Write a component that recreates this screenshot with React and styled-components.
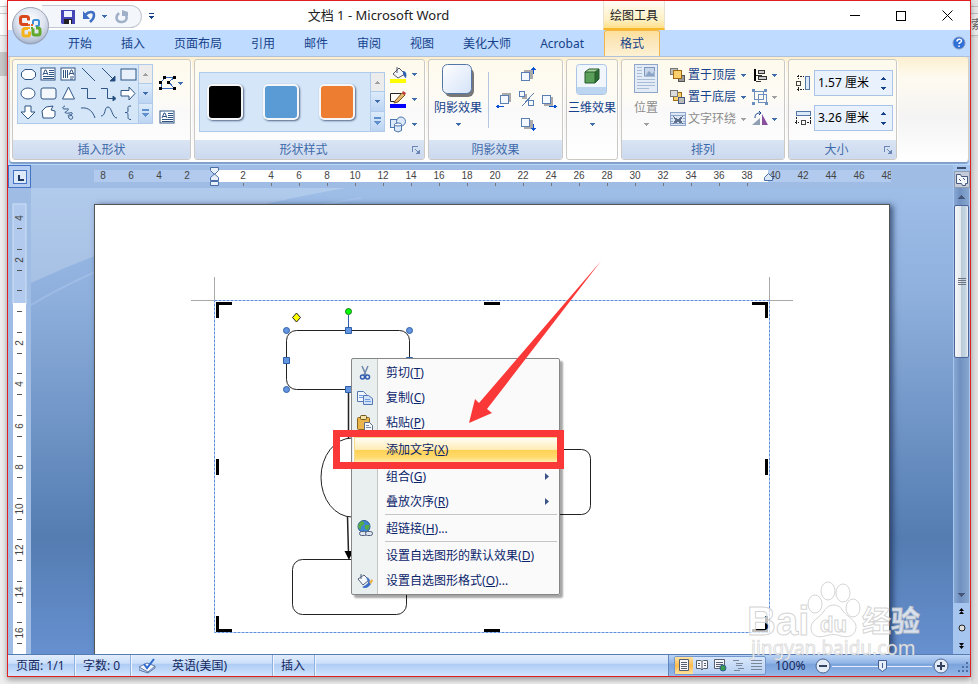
import React from 'react';
import styled, { createGlobalStyle, css } from 'styled-components';

const GlobalStyle = createGlobalStyle`
  * { box-sizing: border-box; }
  body {
    margin: 0;
    font-family: "Noto Sans", "Noto Sans CJK SC", sans-serif;
    font-size: 12px;
    line-height: 16px;
    color: #15428b;
  }
  button, input {
    font: inherit;
    color: inherit;
    margin: 0;
    padding: 0;
    border: 0;
    background: none;
  }
  svg { display: block; flex: none; }
`;

/*
* Desktop and window
* */
const Desktop = styled.div`
  display: flex;
  min-height: 100vh;
  background: linear-gradient(#e9e9e9, #f0f0f0);
`;

const Gutter = styled.div`
  flex: none;
  width: ${(p) => p.$width}px;
  overflow: hidden;
  white-space: nowrap;
  padding-top: 17px;
  color: #666;
  background: ${(p) => (p.$side === 'left'
    ? 'linear-gradient(#fff 0 6px, #ccc 6px 7px, #fafafa 7px 13px, #ccc 13px 14px, #fff 14px 35px, #ccc 35px 36px, #f0f0f0 36px 52px, #c8c8c8 52px 76px, #eee 76px)'
    : 'linear-gradient(#e4e4e4 0 6px, #bbb 6px 7px, #e8e8e8 7px 13px, #bbb 13px 14px, #ececec 14px 35px, #bbb 35px 36px, #dcdcdc 36px 38px, #e2e2e2 38px)')};
`;

const Window = styled.div`
  position: relative;
  flex: 1;
  min-width: 0;
  display: flex;
  flex-direction: column;
  margin-bottom: 7px;
  border: 1px solid #e02020;
  background: #bfdbff;
  box-shadow: 0 3px 6px rgba(0, 0, 0, 0.35);
`;

/*
* Title bar
* */
const TitleBar = styled.header`
  display: flex;
  height: 29px;
  background: #fff;
  color: #222;
`;

const OfficeButton = styled.button`
  position: absolute;
  left: 3px;
  top: 5px;
  z-index: 1;
`;

const QuickAccess = styled.div`
  display: flex;
  align-items: center;
  gap: 8px;
  width: 100px;
  height: 23px;
  margin: 4px 0 0 34px;
  padding-left: 19px;
  border: 1px solid #c3c8d0;
  border-left: 0;
  border-radius: 0 12px 12px 0;
  background: #f3f7fb;
`;

const MoreButton = styled.button`
  margin: 0 0 0 7px;
`;

const Title = styled.div`
  flex: 1;
  text-align: center;
  padding-top: 6px;
  font-size: 13px;
`;

const ContextTitle = styled.div`
  width: 62px;
  padding-top: 7px;
  text-align: center;
  background: linear-gradient(#fffdf7, #fff0c2 70%, #ffe08a);
  border-bottom: 2px solid #f7b92a;
  border-left: 1px solid #e8e0d0;
  border-right: 1px solid #e8e0d0;
`;

const WindowButtons = styled.div`
  display: flex;
  margin-left: 167px;
`;

const WindowButton = styled.button`
  display: flex;
  align-items: center;
  justify-content: center;
  width: 46px;
  height: 29px;
`;

/*
* Ribbon
* */
const TabRow = styled.nav`
  display: flex;
  align-items: flex-end;
  height: 27px;
  padding-left: 45px;
  border-bottom: 1px solid #b0c0d8;
`;

const Tab = styled.button`
  height: 27px;
  padding: 2px 14px 0 15px;
  ${(p) => p.$active && css`
    margin-left: 6px;
    height: 26px;
    padding: 0 15px;
    border: 1px solid #f0b64c;
    border-bottom: 0;
    border-radius: 3px 3px 0 0;
    background: linear-gradient(#ffe09a, #fbe6b9 40%, #fdf1d4);
  `}
`;

const HelpButton = styled.button`
  margin: 0 4px 6px auto;
`;

const Ribbon = styled.div`
  display: flex;
  gap: 3px;
  margin: 0 1px 3px;
  padding: 2px 2px 1px;
  border: 1px solid #d8d0c0;
  border-top: 0;
  border-bottom-color: #fff;
  border-radius: 0 3px 4px 4px;
  background: linear-gradient(#fdf0d0, #fefaf0 20%, #f4f4f4 60%, #fff);
  box-shadow: 0 2px 1px #7f9ec8;
`;

const GroupBox = styled.section`
  flex: none;
  display: flex;
  flex-direction: column;
  width: ${(p) => p.$width}px;
  height: 101px;
  border: 1px solid #ccc9c4;
  border-radius: 3px;
  background: linear-gradient(#fefaec, #fdfbf5 40%, #f9f9f9 50%, #fff);
  box-shadow: 1px 1px 0 #fff;
`;

const GroupBody = styled.div`
  flex: 1;
  display: flex;
  gap: ${(p) => p.$gap || 0}px;
  padding: 4px ${(p) => (p.$pad === undefined ? 4 : p.$pad)}px 0;
`;

const GroupLabel = styled.h2`
  display: flex;
  align-items: center;
  margin: 0;
  height: 19px;
  font-size: 12px;
  font-weight: 400;
  color: #3e6aaa;
  background: linear-gradient(#d9e4f4, #ccd9ee);
  border-radius: 0 0 2px 2px;
  span { flex: 1; text-align: center; }
  button { margin-right: 4px; }
`;

const Gallery = styled.div`
  display: flex;
  height: 60px;
  border: 1px solid #b0cbea;
  background: #d4e6f8;
  margin-top: ${(p) => p.$top || 0}px;
`;

const ShapeGrid = styled.div`
  display: grid;
  grid-template-columns: repeat(6, 20px);
  grid-auto-rows: 19px;
`;

const IconButton = styled.button`
  display: flex;
  align-items: center;
  justify-content: center;
  gap: ${(p) => p.$gap || 0}px;
`;

const ScrollColumn = styled.div`
  display: grid;
  grid-template-rows: repeat(3, 1fr);
  width: 14px;
  border-left: 1px solid #b0cbea;
`;

const ScrollStep = styled.button`
  display: flex;
  align-items: center;
  justify-content: center;
  border-bottom: 1px solid #b0cbea;
  background: ${(p) => (p.$off ? '#ececec' : 'linear-gradient(#dcebfb, #bcd4f2)')};
  &:last-child { border-bottom: 0; }
`;

const SwatchRow = styled.div`
  display: flex;
  align-items: center;
  gap: 20px;
  padding: 0 15px 0 7px;
`;

const Swatch = styled.button`
  width: 36px;
  height: 36px;
  border: 2px solid #f4f6f8;
  border-radius: 5px;
  background: ${(p) => p.$color};
  box-shadow: 1px 1px 2px rgba(30, 50, 90, 0.7);
`;

const Stack = styled.div`
  display: flex;
  flex-direction: column;
  gap: ${(p) => p.$gap || 0}px;
  padding-top: ${(p) => p.$top || 0}px;
`;

const BigButton = styled.button`
  display: flex;
  flex-direction: column;
  align-items: center;
  width: ${(p) => p.$width || 50}px;
  height: 68px;
  white-space: nowrap;
  color: ${(p) => (p.disabled ? '#8d8d8d' : '#15428b')};
`;

const BigIcon = styled.span`
  height: 36px;
`;

const BigCaret = styled.span`
  margin-top: 7px;
`;

const Divider = styled.div`
  width: 1px;
  height: 56px;
  margin: 8px 6px 0 5px;
  background: #b6c8e0;
`;

const NudgePad = styled.div`
  display: grid;
  grid-template-columns: repeat(3, 21px);
  grid-template-rows: 24px 22px 24px;
  justify-items: center;
  align-items: center;
`;

const RowButton = styled.button`
  display: flex;
  align-items: center;
  gap: 2px;
  height: 22px;
  color: ${(p) => (p.disabled ? '#8d8d8d' : '#15428b')};
  span { margin-right: 3px; }
`;

const SizeRow = styled.label`
  display: flex;
  align-items: center;
  gap: 3px;
`;

const SpinBox = styled.span`
  display: flex;
  width: 79px;
  height: 26px;
  border: 1px solid #a9c4e8;
  background: #e9f2fc;
  color: #000;
  input { flex: 1; width: 0; padding-left: 3px; }
`;

const SpinButtons = styled.span`
  display: flex;
  flex-direction: column;
  justify-content: center;
  gap: 7px;
  width: 18px;
  align-items: center;
`;

/*
* Document area
* */
const Workspace = styled.main`
  flex: 1;
  display: flex;
  min-height: 0;
`;

const RulerColumn = styled.div`
  flex: none;
  display: flex;
  flex-direction: column;
  width: 23px;
  background: #9ebce4;
`;

const TabSelector = styled.button`
  display: flex;
  align-items: center;
  justify-content: center;
  width: 23px;
  height: 23px;
  border: 1px solid #4472c4;
  background: #b4cdf0;
`;

const DocColumn = styled.div`
  flex: 1;
  min-width: 0;
  display: flex;
  flex-direction: column;
`;

const RulerRow = styled.div`
  position: relative;
  height: 23px;
  padding: 5px 62px 0 63px;
  background: #9ebce4;
`;

const RulerStrip = styled.div`
  height: 18px;
  overflow: hidden;
  background: linear-gradient(90deg, #b1caed 120px, #fff 120px 674px, #b1caed 674px) 0 0 / 100% 12px no-repeat;
`;

const RulerCells = styled.div`
  display: flex;
  margin-left: -5px;
`;

const RulerCell = styled.span`
  flex: none;
  display: flex;
  flex-direction: column;
  align-items: center;
  gap: 2px;
  width: 28px;
  font: 10px/11px "Liberation Sans", sans-serif;
  color: #444;
  &::after {
    content: "";
    width: 1px;
    height: 3px;
    background: ${(p) => (p.$tick ? '#777' : 'transparent')};
  }
`;

const IndentMarker = styled.svg`
  position: absolute;
  left: ${(p) => p.$left}px;
  top: 2px;
`;

const Backdrop = styled.div`
  flex: 1;
  display: flex;
  position: relative;
  padding: 16px 63px 0;
  overflow: hidden;
  background: linear-gradient(#9ebee8, #8eafdc 24%, #7297c8 48%, #557db2 75%, #6690cf);
`;

const Wave = styled.svg`
  position: absolute;
  left: 0;
  top: 0;
`;

const Page = styled.article`
  position: relative;
  flex: 1;
  min-height: 450px;
  border: 1px solid #555;
  border-bottom: 0;
  background: #fff;
  box-shadow: 3px 1px 6px rgba(20, 40, 80, 0.7);
`;

const Drawing = styled.svg`
  position: absolute;
  left: 0;
  top: 0;
`;

const ScrollBar = styled.div`
  flex: none;
  display: flex;
  flex-direction: column;
  align-items: center;
  width: 17px;
  background: #a6c6f0;
`;

const SplitHandle = styled.div`
  width: 9px;
  height: 2px;
  margin: 2px 0;
  background: #3f4f70;
`;

const RulerToggle = styled.button`
  display: flex;
  align-items: center;
  justify-content: center;
  width: 16px;
  height: 17px;
  border: 1px solid #8e9cb4;
  background: #c5cbd8;
`;

const Track = styled.div`
  flex: 1;
  display: flex;
  flex-direction: column;
  width: 15px;
  background: linear-gradient(90deg, #88a8d4, #7090c0 40%, #88a8d0);
`;

const TrackButton = styled.button`
  display: flex;
  align-items: center;
  justify-content: center;
  height: 17px;
`;

const Thumb = styled.div`
  display: flex;
  align-items: center;
  justify-content: center;
  height: 153px;
  margin-bottom: auto;
  border: 1px solid #4d649a;
  border-radius: 2px;
  background: linear-gradient(90deg, #f4f6f8, #e6eaee 45%, #b9cbd9 50%, #c8d6e2 85%, #f0f4f8);
`;

const Browse = styled.div`
  display: flex;
  flex-direction: column;
  align-items: center;
  justify-content: space-around;
  height: 51px;
`;

/*
* Context menu
* */
const Menu = styled.ul`
  position: absolute;
  left: 256px;
  top: 153px;
  width: 209px;
  margin: 0;
  padding: 1px 0;
  list-style: none;
  border: 1px solid #868686;
  border-radius: 2px;
  color: #0a246a;
  background: linear-gradient(90deg, #e9eeee 25px, #c5c5c5 25px 26px, #fafafa 26px);
  box-shadow: 3px 3px 2px rgba(0, 0, 0, 0.35);
`;

const MenuItem = styled.button`
  display: flex;
  align-items: center;
  width: 100%;
  height: 25px;
  padding-right: 10px;
  text-align: left;
  ${(p) => p.$selected && css`
    width: 205px;
    height: 26px;
    margin: 2px 0 1px 2px;
    border: 1px solid #f2d98c;
    box-shadow: 0 0 0 1px #fff;
    background: linear-gradient(#fffdf4, #ffecb5 48%, #ffd255 52%, #ffda6c 80%, #ffeeb0);
    padding-left: 0;
  `}
`;

const MenuIcon = styled.span`
  flex: none;
  display: flex;
  justify-content: center;
  width: ${(p) => (p.$selected ? 31 : 34)}px;
  padding-right: 8px;
`;

const MenuText = styled.span`
  flex: 1;
`;

const MenuRule = styled.li`
  height: 1px;
  margin: 0 2px 1px 33px;
  background: #c5c5c5;
`;

const RedBox = styled.div`
  position: absolute;
  left: 238px;
  top: 225px;
  width: 231px;
  height: 39px;
  border: 7px solid #fb3838;
`;

/*
* Status bar
* */
const StatusBar = styled.footer`
  display: flex;
  height: 22px;
  border-top: 1px solid #567db1;
  color: #15285f;
  background: linear-gradient(#e2edfc, #cbdffa 40%, #adcbf3 42%, #c4dcfb 80%, #d3e5fd);
`;

const StatusCell = styled.div`
  display: flex;
  align-items: center;
  width: ${(p) => p.$width}px;
  padding-left: 8px;
  white-space: nowrap;
  border-right: 1px solid #8fb0dc;
  box-shadow: 1px 0 0 #eef5fe;
`;

const StatusTools = styled.div`
  display: flex;
  align-items: center;
  width: 302px;
  margin-left: auto;
  padding: 0 1px 0 5px;
  border-left: 1px solid #5f86bd;
  background: linear-gradient(#bcd4f6, #8fb3e5 40%, #7ba3dc 42%, #8bb0e4 80%, #98baea);
`;

const ViewButtons = styled.div`
  display: flex;
  height: 19px;
  border: 1px solid #7397cc;
  border-radius: 2px;
  background: linear-gradient(#d8e7fb, #b6cff2);
`;

const ViewButton = styled.button`
  display: flex;
  align-items: center;
  justify-content: center;
  width: 18px;
  background: ${(p) => (p.$active ? 'linear-gradient(#ffe3a3, #fdbb4e 50%, #ffe39b)' : 'none')};
`;

const ZoomText = styled.span`
  width: 49px;
  padding-left: 9px;
`;

const ZoomLine = styled.svg`
  margin: 0 1px;
`;

const Grip = styled.svg`
  margin: 4px 0 0 auto;
`;

const Watermark = styled.svg`
  position: absolute;
  right: 46px;
  bottom: 15px;
  pointer-events: none;
`;

const Caret = ({ up, color = '#3f6cad', line }) => (
  <svg width="7" height={line ? 8 : 4} shapeRendering="crispEdges" fill={color}>
    {line && <rect x="0" y="0" width="7" height="2" />}
    {up ? <path d="M3 0h1v1h1v1h1v1h1v1H0V3h1V2h1V1h1z" />
      : <path transform={line ? 'translate(0 4)' : undefined} d="M0 0h7v1H6v1H5v1H4v1H3V3H2V2H1V1H0z" />}
  </svg>
);

const SmallCaret = ({ up, color = '#3f6cad' }) => (
  <svg width="5" height="3" shapeRendering="crispEdges" fill={color}>
    <path d={up ? 'M2 0h1v1h1v1h1v1H0V2h1V1h1z' : 'M0 0h5v1H4v1H3v1H2V2H1V1H0z'} />
  </svg>
);

const TextBoxGlyph = () => (
  <g>
    <rect x="1" y="2" width="14" height="12" fill="#fff" />
    <path d="M3 9l2-5h1l2 5M4 7.500h3M9 4.500h5M9 6.500h5M9 8.500h5M3 10.500h11M3 12.500h11" />
  </g>
);

const shapes = [
  ['圆角矩形', <path key="a" fill="#fff" d="M5 3.500h7l3.500 3v4l-3.500 3H5l-3.500-3v-4z" />],
  ['文本框', <TextBoxGlyph key="a" />],
  ['竖排文本框', <g key="a"><rect x="1" y="2" width="14" height="12" fill="#fff" /><path d="M3.500 4v8M5.500 4v8M7.500 4v8M10 11h4M10 13h3M9 9l2-5h1l2 5M10 7.500h3" /></g>],
  ['直线', <path key="a" d="M2 2l13 13" />],
  ['箭头', <g key="a"><path d="M2 2l12 12" /><path fill="#1f497d" d="M15 15v-5l-5 5z" /></g>],
  ['矩形', <rect key="a" x="1" y="3" width="15" height="11" fill="#e8f1fb" />],
  ['椭圆', <ellipse key="a" cx="8" cy="8.500" rx="7" ry="5.500" fill="#fff" />],
  ['圆角矩形', <rect key="a" x="1" y="3" width="15" height="11" rx="2" fill="#f4f8fd" />],
  ['三角形', <path key="a" fill="#fff" d="M8.500 2l6 12h-12z" />],
  ['折线', <path key="a" d="M1 3.500h6.500v10H16" />],
  ['折线箭头', <g key="a"><path d="M1 3.500h6.500v10H13" /><path fill="#1f497d" d="M13 11l3 2.500-3 2.500z" /></g>],
  ['右箭头', <path key="a" fill="#fff" d="M1 5.500h8V2l6 6.500-6 6.500v-4H1z" />],
  ['下箭头', <path key="a" fill="#fff" d="M5 2h6v6h4l-7 7-7-7h4z" />],
  ['任意多边形', <path key="a" fill="#fff" d="M3 14l-1-7 4-4 7-1-2 4 4 1v5l-2 2z" />],
  ['自由曲线', <path key="a" d="M5 2c-3 1-3 3 0 3s4-1 3 1-5 2-2 3 7-2 6 1-5 1-3 4 5 0 3-2-3-2-4 0" />],
  ['弧形', <path key="a" d="M1 4c8-1 12 4 14 10" />],
  ['曲线', <path key="a" d="M1 12c5 0 3-9 7-9s4 11 9 11" />],
  ['左大括号', <path key="a" d="M11 2c-4 0-3 1-3 4s-1 2.500-3 2.500c2 0 3 0 3 3s0 4 3 4" />],
];

const ShapeIcon = ({ children }) => (
  <svg width="17" height="17" fill="none" stroke="#2f5584" strokeWidth="1">{children}</svg>
);

const GalleryScroll = () => (
  <ScrollColumn>
    <ScrollStep $off aria-label="向上"><SmallCaret up color="#a0a0a0" /></ScrollStep>
    <ScrollStep aria-label="向下"><SmallCaret /></ScrollStep>
    <ScrollStep aria-label="其他"><Caret line color="#5f8fcf" /></ScrollStep>
  </ScrollColumn>
);

const Launcher = () => (
  <button aria-label="对话框启动器">
    <svg width="8" height="8" fill="none" stroke="#6a87b5" shapeRendering="crispEdges">
      <path d="M0.500 6V0.500H6" /><path d="M3 3l4 4M7.500 3.500v4h-4" />
      <rect x="5" y="5" width="3" height="3" fill="#6a87b5" stroke="none" />
    </svg>
  </button>
);

const Group = ({ label, width, launcher, gap, pad, children }) => (
  <GroupBox $width={width}>
    <GroupBody $gap={gap} $pad={pad}>{children}</GroupBody>
    {label && <GroupLabel><span>{label}</span>{launcher && <Launcher />}</GroupLabel>}
  </GroupBox>
);

/* a white square with its grey shadow and an arrow */
const Nudge = ({ label, x, y, arrow }) => (
  <button aria-label={label}>
    <svg width="20" height="20" fill="none" stroke="#5b7fb5" shapeRendering="crispEdges">
      <rect x={x} y={y} width="9" height="9" fill="#aaa" stroke="none" />
      <rect x="4.500" y="6.500" width="8" height="8" fill="#f4f8ff" />
      <path d={arrow} stroke="#0b50d0" />
    </svg>
  </button>
);

const layerIcon = (front) => (
  <svg width="16" height="14" strokeWidth="1" shapeRendering="crispEdges">
    {front ? (
      <>
        <rect x="0.500" y="0.500" width="7" height="6" fill="#bbb" stroke="#777" />
        <rect x="8.500" y="7.500" width="6" height="6" fill="#999" stroke="#555" />
        <rect x="3.500" y="2.500" width="8" height="8" fill="#fbcf6b" stroke="#a06a10" />
      </>
    ) : (
      <>
        <rect x="3.500" y="2.500" width="8" height="8" fill="#fbcf6b" stroke="#a06a10" />
        <rect x="0.500" y="0.500" width="7" height="6" fill="#ddd" stroke="#777" />
        <rect x="8.500" y="7.500" width="6" height="6" fill="#bbb" stroke="#455a80" />
      </>
    )}
  </svg>
);

const tabs = ['开始', '插入', '页面布局', '引用', '邮件', '审阅', '视图', '美化大师', 'Acrobat'];

const TitleSection = () => (
  <TitleBar>
    <OfficeButton aria-label="Office 按钮">
      <svg width="40" height="40">
        <defs>
          <radialGradient id="orb" cx="50%" cy="35%" r="65%">
            <stop offset="0" stopColor="#fff" />
            <stop offset="0.600" stopColor="#dde3ee" />
            <stop offset="1" stopColor="#a7b6cf" />
          </radialGradient>
        </defs>
        <circle cx="19.500" cy="20.500" r="18" fill="#7a8393" opacity="0.500" />
        <circle cx="19.500" cy="19.500" r="18" fill="url(#orb)" stroke="#9aa3b5" />
        <g fill="none" strokeWidth="3">
          <path d="M17 18.500h-5q-2.500 0-2.500-2.500v-3.500q0-2 2-2h4q2 0 2 2v2" stroke="#d9481c" />
          <path d="M22 18.500v-3q0-1.500 1.500-1.500h3q1.500 0 1.500 1.500v3q0 1.500-1.500 1.500h-2" stroke="#3f8fd8" strokeWidth="2" />
          <path d="M17 22.500h-3q-2 0-2 2v3.500q0 2 2 2h3q1.500 0 1.500-1.500v-3" stroke="#f5b41c" />
          <path d="M22 22.500v4.500q0 2 2 2h3q2 0 2-2v-3q0-2-2-2h-2" stroke="#62a82c" />
        </g>
        <path d="M17 18h2v2h-2zM20 18h2v2h-2z" fill="#e8682c" />
        <path d="M17 21h2v2h-2z" fill="#f5b41c" /><path d="M20 21h2v2h-2z" fill="#62a82c" />
      </svg>
    </OfficeButton>
    <QuickAccess>
      <button aria-label="保存">
        <svg width="14" height="14">
          <path d="M0 0h14v14H1l-1-1z" fill="#4646b8" />
          <rect x="3" y="1" width="8" height="6" fill="#eef3ff" />
          <rect x="3" y="9" width="8" height="5" fill="#222" /><rect x="8" y="10" width="2" height="4" fill="#fff" />
        </svg>
      </button>
      <IconButton aria-label="撤消" $gap={5}>
        <svg width="14" height="14" fill="none" stroke="#3f6fc4" strokeWidth="2.500">
          <path d="M2 5c4-4 9-4 9 0s-2 5-4 7" /><path d="M0 1v8h7z" fill="#3f6fc4" stroke="none" />
        </svg>
        <SmallCaret />
      </IconButton>
      <button aria-label="重复">
        <svg width="14" height="14" fill="none" stroke="#9fb0c8" strokeWidth="2.500">
          <path d="M4 3c-3 3-3 6-1 8s7 1 8-1 1-4-1-6" /><path d="M7 0v6h6V2z" fill="#9fb0c8" stroke="none" />
        </svg>
      </button>
    </QuickAccess>
    <MoreButton aria-label="自定义快速访问工具栏">
      <svg width="5" height="6" fill="#15428b" shapeRendering="crispEdges"><path d="M0 0h5v1H0zM0 3h5v1H4v1H3v1H2V5H1V4H0z" /></svg>
    </MoreButton>
    <Title>文档 1 - Microsoft Word</Title>
    <ContextTitle>绘图工具</ContextTitle>
    <WindowButtons>
      <WindowButton aria-label="最小化"><svg width="10" height="1"><path d="M0 0h10v1H0z" /></svg></WindowButton>
      <WindowButton aria-label="最大化"><svg width="10" height="10" fill="none" stroke="#000"><rect x="0.500" y="0.500" width="9" height="9" /></svg></WindowButton>
      <WindowButton aria-label="关闭"><svg width="11" height="11" stroke="#000"><path d="M0.500 0.500l10 10M10.500 0.500l-10 10" /></svg></WindowButton>
    </WindowButtons>
  </TitleBar>
);

const SizeField = ({ label, value, icon }) => (
  <SizeRow>
    <svg width="16" height="16" fill="none" stroke="#5577a8" shapeRendering="crispEdges">{icon}</svg>
    <SpinBox>
      <input aria-label={label} defaultValue={value} />
      <SpinButtons>
        <button aria-label="增加"><SmallCaret up color="#15428b" /></button>
        <button aria-label="减少"><SmallCaret color="#15428b" /></button>
      </SpinButtons>
    </SpinBox>
  </SizeRow>
);

const RibbonSection = () => (
  <Ribbon>
    <Group label="插入形状" width={179} gap={6}>
      <Gallery>
        <ShapeGrid>
          {shapes.map(([name, glyph], i) => (
            <IconButton key={i} aria-label={name}><ShapeIcon>{glyph}</ShapeIcon></IconButton>
          ))}
        </ShapeGrid>
        <GalleryScroll />
      </Gallery>
      <Stack $gap={19} $top={12}>
        <IconButton $gap={2} aria-label="编辑形状">
          <svg width="17" height="14" shapeRendering="crispEdges">
            <path d="M2 12.500V6l4-4.500h9L10 6l5 6.500z" fill="none" stroke="#3a6ac0" />
            <path d="M4 0h3v3H4zM14 0h3v3h-3zM0 5h3v3H0zM8 5h3v3H8zM0 11h3v3H0zM14 11h3v3h-3z" />
          </svg>
          <SmallCaret />
        </IconButton>
        <button aria-label="文本框"><ShapeIcon><TextBoxGlyph /></ShapeIcon></button>
      </Stack>
    </Group>

    <Group label="形状样式" width={231} gap={5} launcher>
      <Gallery $top={8}>
        <SwatchRow>
          <Swatch $color="#000" aria-label="黑色" />
          <Swatch $color="#5b9bd5" aria-label="蓝色" />
          <Swatch $color="#ed7d31" aria-label="橙色" />
        </SwatchRow>
        <GalleryScroll />
      </Gallery>
      <Stack $gap={8} $top={2}>
        <IconButton $gap={5} aria-label="形状填充">
          <svg width="17" height="17">
            <path d="M3 8l6-6 6 6-7 4z" fill="#f3f6fb" stroke="#556" /><path d="M7 1v6" stroke="#556" />
            <path d="M13 5c3 0 4 3 3 7-1 0-2-2-3-4z" fill="#2f62b0" /><rect y="13" width="16" height="4" fill="#ff0" />
          </svg>
          <SmallCaret />
        </IconButton>
        <IconButton $gap={5} aria-label="形状轮廓">
          <svg width="17" height="17">
            <path d="M11 2.500H0.500v8h8" fill="none" stroke="#222" /><path d="M5 10l7-8 3 2-7 7-4 1z" fill="#e7b870" stroke="#7c5520" />
            <path d="M12 2l1-2 3 2-1 2z" fill="#c63a3a" /><rect y="13" width="16" height="4" fill="#00f" />
          </svg>
          <SmallCaret />
        </IconButton>
        <IconButton $gap={5} aria-label="更改形状">
          <svg width="17" height="17" fill="#dce9f8" stroke="#4a74ad">
            <rect x="0.500" y="3.500" width="8" height="8" /><circle cx="11" cy="5.500" r="4.500" />
            <path d="M4.500 8.500h7v6q-3.500 3-7 0z" /><ellipse cx="8" cy="8.500" rx="3.500" ry="1.500" fill="#fff" />
          </svg>
          <SmallCaret />
        </IconButton>
      </Stack>
    </Group>

    <Group label="阴影效果" width={135}>
      <BigButton>
        <BigIcon>
          <svg width="34" height="34">
            <defs><linearGradient id="tile" x2="1" y2="1"><stop stopColor="#fff" /><stop offset="1" stopColor="#d4e3f8" /></linearGradient></defs>
            <rect x="4" y="4" width="29" height="29" rx="6" fill="#777" /><rect x="1.500" y="0.500" width="29" height="29" rx="5" fill="url(#tile)" stroke="#5577a8" />
          </svg>
        </BigIcon>
        阴影效果
        <BigCaret><SmallCaret /></BigCaret>
      </BigButton>
      <Divider />
      <NudgePad>
        <span /><Nudge label="略向上移" x={7} y={4} arrow="M16.500 8V1M14 3.500h5M15 2.500h3" /><span />
        <Nudge label="略向左移" x={6} y={4} arrow="M0 17.500h8M1 16.500h2M1 18.500h2" />
        <button aria-label="设置/取消阴影">
          <svg width="16" height="16" fill="#f4f8ff" stroke="#5b7fb5" shapeRendering="crispEdges">
            <rect x="3" y="3" width="5" height="5" fill="#aaa" stroke="none" /><rect x="0.500" y="0.500" width="5" height="5" /><rect x="9.500" y="9.500" width="5" height="5" /><path d="M15 2L3 15" />
          </svg>
        </button>
        <Nudge label="略向右移" x={6} y={8} arrow="M11 17.500h8M16 16.500h2M16 18.500h2" />
        <span /><Nudge label="略向下移" x={7} y={8} arrow="M16.500 12v7M14 16.500h5M15 17.500h3" /><span />
      </NudgePad>
    </Group>

    <Group width={52} pad={0}>
      <BigButton>
        <BigIcon>
          <svg width="32" height="32">
            <rect x="0.500" y="0.500" width="30" height="30" rx="3" fill="#f1f6fc" stroke="#a9c4e6" />
            <path d="M1 23h29v5q0 2-2 2H3q-2 0-2-2z" fill="#bcd5f1" />
            <path d="M9 8h10v11H9z" fill="#5aa05a" /><path d="M9 8l4-3h10l-4 3z" fill="#a9d6a0" /><path d="M19 8l4-3v10l-4 4z" fill="#2b6b33" />
            <path d="M9 8h10v11H9zM9 8l4-3h10v10l-4 4M19 8l4-3" fill="none" stroke="#275a2c" />
          </svg>
        </BigIcon>
        三维效果
        <BigCaret><SmallCaret /></BigCaret>
      </BigButton>
    </Group>

    <Group label="排列" width={164} pad={0}>
      <BigButton disabled $width={48}>
        <BigIcon>
          <svg width="24" height="29" fill="none" stroke="#a9bcd6" shapeRendering="crispEdges">
            <rect x="0.500" y="0.500" width="23" height="28" fill="#e3ebf6" stroke="#8fa6c8" />
            <path d="M3 3.500h5M3 6.500h5M3 9.500h5M3 12.500h5M3 15.500h18M3 18.500h18M3 21.500h18M3 24.500h12" />
            <rect x="10.500" y="3.500" width="10" height="9" fill="#c8d6ea" stroke="#7f98bf" /><path d="M11 12l4-5 3 3 2-2v4z" fill="#8aa2c6" />
          </svg>
        </BigIcon>
        位置
        <BigCaret><SmallCaret color="#a0a0a0" /></BigCaret>
      </BigButton>
      <Stack>
        <RowButton>{layerIcon(true)}<span>置于顶层</span><SmallCaret /></RowButton>
        <RowButton>{layerIcon(false)}<span>置于底层</span><SmallCaret /></RowButton>
        <RowButton disabled>
          <svg width="16" height="15" fill="none" stroke="#8ea6cc" shapeRendering="crispEdges">
            <path d="M0.500 0.500h15v13h-15z" fill="#dde7f4" /><path d="M0 3.500h16M0 6.500h3M13 6.500h3M0 9.500h3M13 9.500h3M0 11.500h16" /><path d="M3 4l5 3 5-3-2 4 2 4-5-2-5 2 2-4z" fill="#5d6f8c" stroke="none" />
          </svg>
          <span>文字环绕</span>
          <SmallCaret color="#a0a0a0" />
        </RowButton>
      </Stack>
      <Stack>
        <RowButton aria-label="对齐">
          <svg width="24" height="16" fill="none" stroke="#333" shapeRendering="crispEdges">
            <path d="M9 2v12" stroke="#000" strokeWidth="2" /><rect x="12.500" y="3.500" width="6" height="3" fill="#ccc" /><rect x="12.500" y="9.500" width="8" height="3" fill="#ccc" /><path d="M10 8.500h6M10 14.500h5" />
          </svg>
          <SmallCaret />
        </RowButton>
        <RowButton disabled aria-label="组合">
          <svg width="24" height="16" fill="none" stroke="#6d8fbe" shapeRendering="crispEdges">
            <rect x="8.500" y="2.500" width="9" height="8" /><rect x="12.500" y="5.500" width="8" height="8" /><path d="M6 0h3v3H6zM18 0h3v3h-3zM6 13h3v3H6zM19 13h3v3h-3z" fill="#6d8fbe" stroke="none" />
          </svg>
          <SmallCaret color="#a0a0a0" />
        </RowButton>
        <RowButton aria-label="旋转">
          <svg width="24" height="16"><path d="M6 14h8V7z" fill="#8fa0b5" /><path d="M16 14V3l6 11z" fill="#8b4f9f" /><path d="M9 7c0-4 2-5 5-5M13 0l2 2-2 2" fill="none" stroke="#15428b" /></svg>
          <SmallCaret />
        </RowButton>
      </Stack>
    </Group>

    <Group label="大小" width={109} launcher pad={6}>
      <Stack $gap={9} $top={6}>
        <SizeField label="形状高度" value="1.57 厘米" icon={<><rect x="10.500" y="1.500" width="4" height="13" fill="#dce9f8" /><rect x="1.500" y="6.500" width="4" height="4" stroke="#444" /><path d="M2 1.500h7M3.500 0v4M2 14.500h7M3.500 12v4" stroke="#222" strokeDasharray="2 1" /></>} />
        <SizeField label="形状宽度" value="3.26 厘米" icon={<><rect x="1.500" y="1.500" width="14" height="4" fill="#dce9f8" /><rect x="6.500" y="10.500" width="4" height="4" stroke="#444" /><path d="M1.500 7v7M15.500 7v7M0 12.500h4M12 12.500h4" stroke="#222" strokeDasharray="2 1" /></>} />
      </Stack>
    </Group>
  </Ribbon>
);

/* -8 .. 48 characters, zero is left blank */
const rulerMarks = Array.from({ length: 29 }, (_, i) => i * 2 - 8);

const HorizontalRuler = () => (
  <RulerRow>
    <RulerStrip>
      <RulerCells>
        {rulerMarks.map((n) => (
          <RulerCell key={n} $tick={n > 0 && n < 40}>{n === 0 ? '\u00a0' : Math.abs(n)}</RulerCell>
        ))}
      </RulerCells>
    </RulerStrip>
    <IndentMarker $left={179} width="10" height="20" fill="#e9f0fa" stroke="#4a6fa8">
      <path d="M0.500 0.500h8v3l-4 4-4-4zM0.500 13.500v-3l4-3.500 4 3.500v3zM0.500 14.500h8v4h-8z" />
    </IndentMarker>
    <IndentMarker $left={733} width="10" height="20" fill="#d9e6f6" stroke="#4a6fa8">
      <path d="M0.500 13.500v-3l4-4 4 4v3z" />
    </IndentMarker>
  </RulerRow>
);

const vMarks = [-4, -2, 2, 4, 6, 8, 10, 12, 14, 16];
const vTicks = Array.from({ length: 21 }, (_, i) => Math.round(40 + i * 20.75));

const VerticalRuler = () => (
  <svg width="23" height="466">
    <rect x="5" y="16" width="13" height="100" fill="#b1caed" stroke="#d0e0f6" />
    <rect x="5" y="115" width="13" height="351" fill="#fff" />
    <g stroke="#555" shapeRendering="crispEdges">
      {vTicks.map((y) => <path key={y} d={`M9 ${y}.500h5`} />)}
    </g>
    <g fill="#444" fontFamily="Liberation Sans" fontSize="10" textAnchor="middle">
      {vMarks.map((n) => {
        const y = Math.round(113 + (n < 0 ? n + 0 : n) * 20.75);
        return <text key={n} transform={`translate(15 ${y}) rotate(-90)`}>{Math.abs(n)}</text>;
      })}
    </g>
  </svg>
);

const Shapes = () => (
  <Drawing width="795" height="450" viewBox="95 205 795 450" fill="none">
    <path d="M214.500 277v23M191 300.500h23M769.500 277v23M769 300.500h24" stroke="#aaa" />
    <rect x="214.500" y="300.500" width="555" height="332" stroke="#5b8fdb" strokeDasharray="3 1" />
    <path stroke="#000" strokeWidth="3" d="M217.500 318v-14.500H232M752 303.500h14.500V318M217.500 616v14.500H232M752 630.500h14.500V616M484 303.500h16M484 630.500h16M217.500 459v16M766.500 459v16" />
    <g stroke="#222">
      <rect x="286.500" y="330.500" width="123" height="59" rx="10" />
      <ellipse cx="352" cy="477.500" rx="31" ry="39.500" />
      <rect x="292.500" y="559.500" width="114" height="55" rx="10" />
      <rect x="500.500" y="449.500" width="90" height="65" rx="9" />
      <path d="M348.500 390v48M347.500 517l1 36" strokeWidth="1.500" />
    </g>
    <path d="M344.500 551h8.500l-4 9z" fill="#000" />
    <path d="M348.500 315v12" stroke="#2f5fa8" />
    <circle cx="348.500" cy="311.500" r="3" fill="#0f0" stroke="#1f7a1f" />
    <path d="M296.500 313l4 4.500-4 4.500-4-4.500z" fill="#ff0" stroke="#222" />
    <g fill="#6496e0" stroke="#2f5fa8">
      <circle cx="286.500" cy="330.500" r="3" />
      <circle cx="409.500" cy="330.500" r="3" />
      <circle cx="286.500" cy="389.500" r="3" />
      <path d="M345.500 327.500h6v6h-6zM283.500 357.500h6v6h-6zM406.500 357.500h6v6h-6zM345.500 386.500h6v6h-6z" />
    </g>
  </Drawing>
);

const CutIcon = (
  <svg width="16" height="16" fill="none"><path d="M5 1l4 9M11 1l-4 9" stroke="#6f87ad" strokeWidth="1.500" /><circle cx="5.500" cy="12" r="2" stroke="#2f5cb0" strokeWidth="1.500" /><circle cx="10.500" cy="12" r="2" stroke="#2f5cb0" strokeWidth="1.500" /></svg>
);
const CopyIcon = (
  <svg width="16" height="16" fill="#f2f7ff" stroke="#5578b5"><path d="M0.500 1.500h6l3 3v7h-9z" /><path d="M6.500 5.500h5l4 3v6h-9z" fill="#d3e2fb" /><path d="M2 5.500h4M2 7.500h4M8 9.500h5M8 11.500h6" stroke="#6f9be0" /></svg>
);
const PasteIcon = (
  <svg width="16" height="16"><rect x="0.500" y="2.500" width="12" height="12" rx="1" fill="#e9b44c" stroke="#8d6420" /><rect x="3.500" y="0.500" width="6" height="4" rx="1" fill="#f4e3a5" stroke="#6d5520" /><path d="M7.500 7.500h5l3 3v5h-8z" fill="#f4f7fc" stroke="#5f6e88" /><path d="M9 10.500h3M9 12.500h5" stroke="#7b8da8" /></svg>
);
const LinkIcon = (
  <svg width="16" height="17"><circle cx="7" cy="6.500" r="6" fill="#3f86d0" stroke="#265a90" /><path d="M3 2c3-2 5 0 4 2s-3 1-3 4-3 0-3-2zM8 5l5 0-2 5-3-1z" fill="#57ab45" /><g fill="#dfe5ee" stroke="#50607c"><rect x="2.500" y="11.500" width="7" height="4" rx="2" /><rect x="8.500" y="11.500" width="7" height="4" rx="2" /></g></svg>
);
const FormatIcon = (
  <svg width="16" height="16"><path d="M1 6l6-4 5 5-6 5z" fill="#f4f7fc" stroke="#50607c" /><path d="M4 1v5" stroke="#50607c" /><path d="M9 4c4 1 5 4 3 8z" fill="#4a75bd" /><path d="M5 14c3 2 6 1 9-3l-2-2c-2 2-4 4-7 5z" fill="#3c6cc8" /><path d="M12 9l3-3 1 2-2 3z" fill="#eab24a" /></svg>
);

const menu = [
  { text: '剪切', hotkey: 'T', icon: CutIcon },
  { text: '复制', hotkey: 'C', icon: CopyIcon },
  { text: '粘贴', hotkey: 'P', icon: PasteIcon },
  { text: '添加文字', hotkey: 'X', selected: true },
  { text: '组合', hotkey: 'G', submenu: true },
  { text: '叠放次序', hotkey: 'R', submenu: true },
  { rule: true },
  { text: '超链接', hotkey: 'H', tail: '...', icon: LinkIcon },
  { rule: true },
  { text: '设置自选图形的默认效果', hotkey: 'D' },
  { text: '设置自选图形格式', hotkey: 'O', tail: '...', icon: FormatIcon },
];

const ContextMenu = () => (
  <Menu>
    {menu.map((item, i) => (item.rule ? <MenuRule key={i} /> : (
      <li key={i}>
        <MenuItem $selected={item.selected}>
          <MenuIcon $selected={item.selected}>{item.icon}</MenuIcon>
          <MenuText>{item.text}(<u>{item.hotkey}</u>){item.tail}</MenuText>
          {item.submenu && <svg width="4" height="7" fill="#3b5488"><path d="M0 0l4 3.500L0 7z" /></svg>}
        </MenuItem>
      </li>
    )))}
  </Menu>
);

const VerticalScroll = () => (
  <ScrollBar>
    <SplitHandle />
    <RulerToggle aria-label="标尺">
      <svg width="12" height="12" fill="#f2f5fb" stroke="#45597e"><path d="M0.500 0.500h4l1 2h6v7h-2v2h-3l-1-2h-5z" /><path d="M3 5l2 2M7 4l2 2" /></svg>
    </RulerToggle>
    <Track>
      <TrackButton aria-label="向上滚动"><Caret up color="#46557a" /></TrackButton>
      <Thumb><svg width="8" height="8" stroke="#6b7480" shapeRendering="crispEdges"><path d="M0 0.500h8M0 2.500h8M0 4.500h8M0 6.500h8" /></svg></Thumb>
      <TrackButton aria-label="向下滚动"><Caret color="#46557a" /></TrackButton>
    </Track>
    <Browse>
      <button aria-label="前一页"><svg width="5" height="6"><path d="M0 3l2.500-3L5 3zM0 6l2.500-3L5 6z" /></svg></button>
      <button aria-label="选择浏览对象"><svg width="8" height="8"><circle cx="4" cy="4" r="3" fill="#ddd" stroke="#222" /></svg></button>
      <button aria-label="下一页"><svg width="5" height="6"><path d="M0 0h5L2.500 3zM0 3h5L2.500 6z" /></svg></button>
    </Browse>
  </ScrollBar>
);

const viewIcons = [
  ['页面视图', <path key="a" d="M1.500 0.500h9v11h-9zM3 3.500h6M3 5.500h6M3 7.500h6M3 9.500h6" />],
  ['阅读版式视图', <path key="a" d="M0.500 1.500h4l1.500 1 1.500-1h4v8h-4L6 11l-1.500-1.500h-4zM6 3v8M2 4.500h2M2 6.500h2M8 4.500h2M8 6.500h2" />],
  ['Web 版式视图', <g key="a"><path d="M0.500 0.500h10v9h-10zM2 3.500h7M2 5.500h7M2 7.500h4" /><circle cx="9" cy="9" r="3" fill="#3c9a50" stroke="#2c5f90" /></g>],
  ['大纲视图', <path key="a" fill="none" stroke="#7a8699" d="M1 1.500h6M4 4.500h7M4 6.500h6M6 9.500h6M2 11.500h6" />],
  ['普通视图', <path key="a" fill="none" stroke="#7a8699" d="M1 1.500h11M1 4.500h11M1 7.500h11M1 10.500h11" />],
];

const Status = () => (
  <StatusBar>
    <StatusCell $width={67}>页面: 1/1</StatusCell>
    <StatusCell $width={56}>字数: 0</StatusCell>
    <StatusCell $width={142}>
      <svg width="33" height="16">
        <path d="M0 9l8-4 8 3-7 6z" fill="#f2f6fc" stroke="#5f78a5" /><path d="M0 10v2l9 3 7-5V8" fill="none" stroke="#5f78a5" /><path d="M5 6l3 4 7-9" fill="none" stroke="#2b6bd0" strokeWidth="2" />
      </svg>
      英语(美国)
    </StatusCell>
    <StatusCell $width={42}>插入</StatusCell>
    <StatusTools>
      <ViewButtons>
        {viewIcons.map(([name, glyph], i) => (
          <ViewButton key={name} $active={i === 0} aria-label={name}>
            <svg width="13" height="13" fill="#f5f7fa" stroke="#555f70">{glyph}</svg>
          </ViewButton>
        ))}
      </ViewButtons>
      <ZoomText>100%</ZoomText>
      <button aria-label="缩小"><svg width="16" height="16"><circle cx="8" cy="8" r="7" fill="#e3ebf6" stroke="#4a658f" /><path d="M4 8h8" stroke="#33435f" strokeWidth="2" /></svg></button>
      <ZoomLine width="100" height="16" role="img" aria-label="显示比例">
        <path d="M0 8.500h100" stroke="#e3edfb" />
        <path d="M46.500 2.500h8v8l-4 3-4-3z" fill="#e8effa" stroke="#3f5f95" /><path d="M50.500 5v5" stroke="#3f5f95" />
      </ZoomLine>
      <button aria-label="放大"><svg width="16" height="16"><circle cx="8" cy="8" r="7" fill="#e3ebf6" stroke="#4a658f" /><path d="M4 8h8M8 4v8" stroke="#33435f" strokeWidth="2" /></svg></button>
      <Grip width="11" height="11" fill="#4f6fa3"><path d="M8 0h2v2H8zM4 4h2v2H4zM8 4h2v2H8zM0 8h2v2H0zM4 8h2v2H4zM8 8h2v2H8z" /></Grip>
    </StatusTools>
  </StatusBar>
);

const Brand = () => (
  <Watermark width="186" height="90" fill="#fff" fillOpacity="0.750" stroke="#c9c9c9" strokeOpacity="0.800" strokeWidth="1">
    <g>
      <ellipse cx="77" cy="33" rx="7" ry="9" />
      <ellipse cx="90" cy="20" rx="7" ry="9" />
      <ellipse cx="105" cy="22" rx="7" ry="9" />
      <ellipse cx="115" cy="37" rx="7" ry="9" />
      <path d="M73 57c0-8 9-10 13-17 5-8 15-8 19 0 4 6 14 9 13 17s-8 10-15 8-9-2-16 0-14 0-14-8z" />
    </g>
    <g fontFamily="Liberation Sans" fontWeight="700">
      <text x="9" y="64" fontSize="40">Bai</text>
      <text x="82" y="61" fontSize="22">du</text>
    </g>
    <text x="124" y="61" fontSize="29" fontWeight="700" fontFamily="Noto Sans CJK SC">经验</text>
    <text x="13" y="84" fontSize="19" stroke="#aaa" strokeOpacity="0.400" fillOpacity="0.900" fontFamily="Noto Sans">jingyan.baidu.com</text>
  </Watermark>
);

const App = () => (
  <>
    <GlobalStyle />
    <Desktop>
      <Gutter $side="left" $width={7} />
      <Window>
        <TitleSection />
        <TabRow>
          {tabs.map((name) => <Tab key={name}>{name}</Tab>)}
          <Tab $active>格式</Tab>
          <HelpButton aria-label="帮助">
            <svg width="14" height="14"><circle cx="7" cy="7" r="6" fill="#2f6fd8" stroke="#7f97c0" /><path d="M5 5.500c0-3 4.500-3 4.500-.5 0 1.500-2.500 1.500-2.500 3M7 9.500v1.500" fill="none" stroke="#fff" strokeWidth="1.500" /></svg>
          </HelpButton>
        </TabRow>
        <RibbonSection />
        <Workspace>
          <RulerColumn>
            <TabSelector aria-label="制表符">
              <svg width="14" height="14" shapeRendering="crispEdges"><rect x="0.500" y="0.500" width="13" height="13" fill="#dfeaf8" stroke="#4472c4" /><path d="M6 5v5h5" fill="none" stroke="#1f3864" strokeWidth="2" /></svg>
            </TabSelector>
            <VerticalRuler />
          </RulerColumn>
          <DocColumn>
            <HorizontalRuler />
            <Backdrop>
              <Wave width="400" height="200">
                <path d="M0 0H315Q140 30 0 95z" fill="#fff" opacity="0.200" />
                <path d="M0 117Q120 45 330 10" fill="none" stroke="#b5cdf0" strokeWidth="2" opacity="0.400" />
              </Wave>
              <Page>
                <Shapes />
                <ContextMenu />
                <RedBox />
                <Drawing width="560" height="240" viewBox="95 205 560 240">
                  <path d="M601 261L487 409l5 4-23 10 6-24 4 4z" fill="#fb3838" />
                </Drawing>
              </Page>
            </Backdrop>
          </DocColumn>
          <VerticalScroll />
        </Workspace>
        <Status />
        <Brand />
      </Window>
      <Gutter $side="right" $width={7}>索</Gutter>
    </Desktop>
  </>
);

export default App;
